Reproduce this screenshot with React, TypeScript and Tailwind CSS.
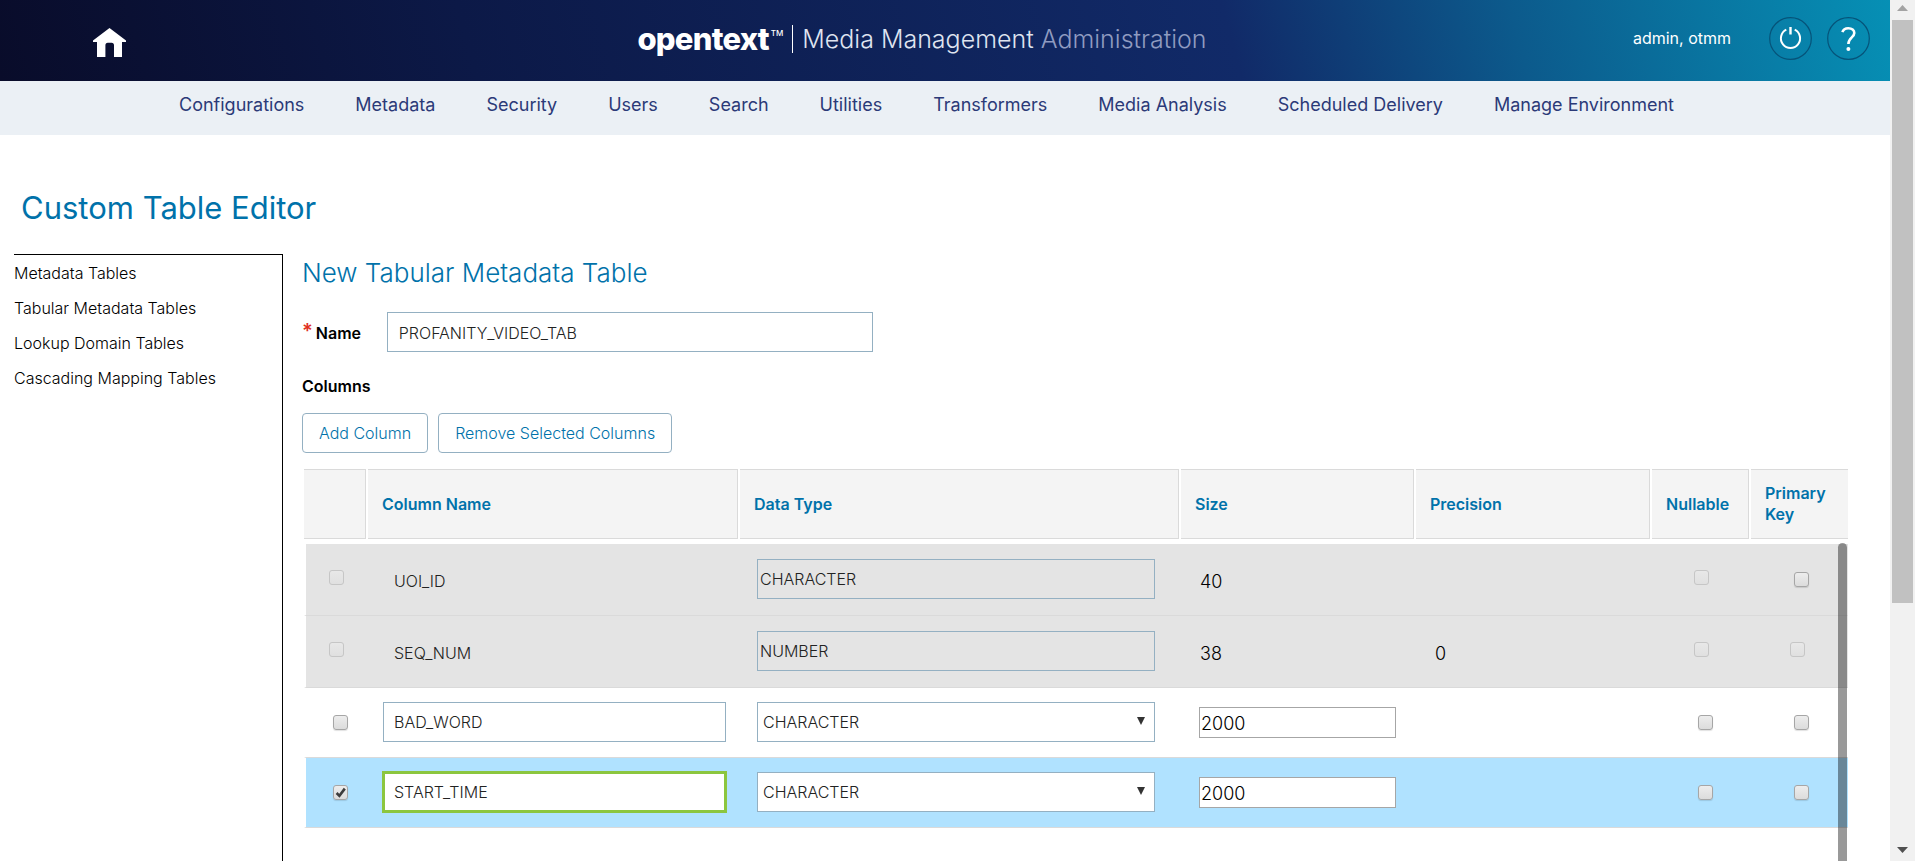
import React, { useState } from "react";

const navItems = [
  "Configurations",
  "Metadata",
  "Security",
  "Users",
  "Search",
  "Utilities",
  "Transformers",
  "Media Analysis",
  "Scheduled Delivery",
  "Manage Environment",
];

const sideItems = [
  "Metadata Tables",
  "Tabular Metadata Tables",
  "Lookup Domain Tables",
  "Cascading Mapping Tables",
];

const headings = ["", "Column Name", "Data Type", "Size", "Precision", "Nullable", "Primary Key"];

type Row = {
  name: string;
  type: string;
  size: string;
  precision?: string;
  fixed: boolean;
  keyDisabled?: boolean;
  selected?: boolean;
};

const initialRows: Row[] = [
  { name: "UOI_ID", type: "CHARACTER", size: "40", fixed: true },
  { name: "SEQ_NUM", type: "NUMBER", size: "38", precision: "0", fixed: true, keyDisabled: true },
  { name: "BAD_WORD", type: "CHARACTER", size: "2000", fixed: false },
  { name: "START_TIME", type: "CHARACTER", size: "2000", fixed: false, selected: true },
];

function HomeIcon() {
  return (
    <svg viewBox="0 0 33 29" className="h-[29px] w-[33px]" fill="#fff" aria-hidden="true">
      <path d="M16.5 0 33 12.6V14H29V29H21V17.5Q21 14.8 18.6 14.8H14.8Q12.4 14.8 12.4 17.5V29H4V14H0V12.6Z" />
    </svg>
  );
}

function PowerIcon() {
  return (
    <svg viewBox="0 0 43 43" className="h-[43px] w-[43px]" fill="none" aria-hidden="true">
      <circle cx="21.5" cy="21.5" r="20.8" stroke="#065379" strokeWidth="1.2" />
      <path d="M17.3 12.7A9.6 9.6 0 1 0 25.7 12.7" stroke="#fff" strokeWidth="2" />
      <path d="M21.5 10V17.5" stroke="#fff" strokeWidth="2.4" />
    </svg>
  );
}

function HelpIcon() {
  return (
    <svg viewBox="0 0 43 43" className="h-[43px] w-[43px]" fill="none" aria-hidden="true">
      <circle cx="21.5" cy="21.5" r="20.8" stroke="#065379" strokeWidth="1.2" />
      <path
        d="M15.4 15.2C16.2 12.6 18.4 11.3 21.3 11.3C24.9 11.3 27.3 13.2 27.3 16.1C27.3 20.4 21.4 20.6 21.4 27"
        stroke="#fff"
        strokeWidth="2.6"
      />
      <circle cx="21.4" cy="32" r="2" fill="#fff" />
    </svg>
  );
}

function Check({ label, disabled, checked }: { label: string; disabled?: boolean; checked?: boolean }) {
  const [on, setOn] = useState(!!checked);
  return (
    <span className="relative block h-[15px] w-[15px]">
      <input
        type="checkbox"
        aria-label={label}
        disabled={disabled}
        checked={on}
        onChange={(e) => setOn(e.target.checked)}
        className="block h-[15px] w-[15px] appearance-none rounded-[3px] border border-[#a6a6a6] bg-linear-to-b from-[#ededed] to-[#dcdcdc] shadow-[0_1px_1px_rgba(0,0,0,0.12)] disabled:border-[#c6c6c6] disabled:from-[#e8e8e8] disabled:to-[#e0e0e0] disabled:shadow-none"
      />
      {on && (
        <svg viewBox="0 0 15 15" className="pointer-events-none absolute inset-0 h-[15px] w-[15px]" aria-hidden="true">
          <path d="M3.6 8 6.4 10.8 11.8 3.6" fill="none" stroke="#3c3c3c" strokeWidth="2.6" />
        </svg>
      )}
    </span>
  );
}

function TableRow({ row }: { row: Row }) {
  const bg = row.selected ? "bg-[#b0e2ff]" : row.fixed ? "bg-[#e4e4e4]" : "bg-white";
  const cell = `${bg} ${row.fixed ? "h-[72px]" : "h-[70px]"} border-b border-[#dadada] p-0 pb-px align-middle`;
  return (
    <tr>
      <td className={`${cell} border-l-2 border-l-white`}>
        <div className={row.fixed ? "-mt-1 pl-[23px]" : "pl-[27px]"}>
          <Check label={`Select ${row.name}`} disabled={row.fixed} checked={row.selected} />
        </div>
      </td>
      <td className={cell}>
        {row.fixed ? (
          <div className="pt-1 pl-[26px] text-base font-light text-[#222]">{row.name}</div>
        ) : (
          <div className="pr-[14px] pl-[15px]">
            <input
              aria-label="Column name"
              defaultValue={row.name}
              className={`block h-10 w-full bg-white text-base font-light text-[#222] outline-none ${
                row.selected ? "border-2 border-[#8cc63f] px-[9px] ring-1 ring-[#8cc63f]" : "border border-[#94b0c2] px-[10px]"
              }`}
            />
          </div>
        )}
      </td>
      <td className={cell}>
        <div className="relative mr-[26px] ml-[17px]">
          {row.fixed ? (
            <input
              aria-label={`${row.name} data type`}
              readOnly
              value={row.type}
              className="block h-10 w-full border border-[#94b0c2] bg-transparent px-0.5 text-base font-light text-[#222] outline-none"
            />
          ) : (
            <>
              <select
                aria-label={`${row.name} data type`}
                defaultValue={row.type}
                className="block h-10 w-full appearance-none border border-[#94b0c2] bg-white px-[5px] text-base font-light text-[#222] outline-none"
              >
                <option>CHARACTER</option>
                <option>NUMBER</option>
                <option>DATE</option>
              </select>
              <svg viewBox="0 0 8 8" className="pointer-events-none absolute top-[15px] right-[10px] h-2 w-2" aria-hidden="true">
                <path d="M0 0H8L4 8Z" fill="#333" />
              </svg>
            </>
          )}
        </div>
      </td>
      <td className={cell}>
        {row.fixed ? (
          <div className="pt-1.5 pl-[19px] text-lg font-light text-black">{row.size}</div>
        ) : (
          <div className="pt-px pr-5 pl-[18px]">
            <input
              aria-label={`${row.name} size`}
              defaultValue={row.size}
              className="block h-[31px] w-full border border-[#a6a6a6] bg-white px-px pt-0.5 text-lg font-light text-black outline-none"
            />
          </div>
        )}
      </td>
      <td className={cell}>
        <div className="pt-1.5 pl-[19px] text-lg font-light text-black">{row.precision}</div>
      </td>
      <td className={cell}>
        <div className={row.fixed ? "-mt-1 pl-[42px]" : "pl-[46px]"}>
          <Check label={`${row.name} nullable`} disabled={row.fixed} />
        </div>
      </td>
      <td className={cell}>
        <div className={row.keyDisabled ? "-mt-1 pl-[39px]" : "pl-[43px]"}>
          <Check label={`${row.name} primary key`} disabled={row.keyDisabled} />
        </div>
      </td>
    </tr>
  );
}

export default function App() {
  return (
    <div className="flex h-screen overflow-hidden bg-white font-['Inter',sans-serif] text-black">
      <div className="flex min-w-0 flex-1 flex-col">
        <header className="grid h-[81px] shrink-0 grid-cols-[1fr_auto_1fr] items-center bg-[linear-gradient(75deg,#090c2a_0%,#0c1947_25%,#112a68_65%,#0c5a8c_80%,#0690b5_100%)] pr-5">
          <a href="#home" aria-label="Home" className="ml-[93px] w-fit pt-1">
            <HomeIcon />
          </a>
          <div className="mr-[26px] flex items-center pb-1 whitespace-nowrap text-white">
            <span className="text-[31px] leading-9 font-extrabold tracking-tight">opentext</span>
            <span className="mb-3 ml-0.5 text-[8px] leading-3 font-medium">TM</span>
            <span className="mx-[9px] h-7 w-px bg-white" />
            <span className="text-[25px] leading-9 font-light text-[#dfe4f0]">
              Media Management <span className="font-light text-[#8f9bc0]">Administration</span>
            </span>
          </div>
          <div className="flex items-center justify-end pb-[5px]">
            <span className="mr-[38px] text-base text-white">admin, otmm</span>
            <button type="button" aria-label="Log out" className="mr-[15px]">
              <PowerIcon />
            </button>
            <button type="button" aria-label="Help">
              <HelpIcon />
            </button>
          </div>
        </header>

        <nav className="flex h-[54px] shrink-0 gap-[51px] bg-[#ebf0f5] pt-[10px] pl-[179px] text-lg leading-7 font-normal whitespace-nowrap text-[#2b3a78]">
          {navItems.map((item) => (
            <a key={item} href="#nav">
              {item}
            </a>
          ))}
        </nav>

        <h1 className="mt-[53px] mb-[26px] ml-[21px] text-[31px] leading-10 font-normal text-[#0072aa]">Custom Table Editor</h1>

        <div className="flex min-h-0 flex-1">
          <aside className="ml-[14px] flex w-[269px] shrink-0 flex-col border-t border-r border-black pt-px text-base leading-[35px] font-light">
            {sideItems.map((item) => (
              <a key={item} href="#tables">
                {item}
              </a>
            ))}
          </aside>

          <main className="flex min-w-0 flex-1 flex-col pr-[42px] pl-[19px]">
            <h2 className="pt-px text-[26px] leading-9 font-[350] text-[#0072aa]">New Tabular Metadata Table</h2>

            <div className="mt-[21px] flex h-10 items-center">
              <span className="mr-[3px] pb-0.5 text-xl leading-10 font-semibold text-[#e0301e]">*</span>
              <label htmlFor="table-name" className="w-[71px] pt-px text-base font-semibold">
                Name
              </label>
              <input
                id="table-name"
                defaultValue="PROFANITY_VIDEO_TAB"
                className="h-10 w-[486px] border border-[#94b0c2] bg-white px-[11px] pt-px text-base font-light text-[#222] outline-none"
              />
            </div>

            <h3 className="mt-[22px] text-base leading-6 font-semibold">Columns</h3>

            <div className="mt-[15px] flex gap-[10px]">
              <button type="button" className="h-10 rounded-[4px] border border-[#94b0c2] px-4 text-base font-light text-[#0072aa]">
                Add Column
              </button>
              <button type="button" className="h-10 rounded-[4px] border border-[#94b0c2] px-4 text-base font-light text-[#0072aa]">
                Remove Selected Columns
              </button>
            </div>

            <div className="relative mt-4 ml-0.5 flex-1">
              <table className="w-full table-fixed border-separate border-spacing-0">
                <colgroup>
                  <col className="w-[64px]" />
                  <col className="w-[372px]" />
                  <col className="w-[441px]" />
                  <col className="w-[235px]" />
                  <col className="w-[236px]" />
                  <col className="w-[99px]" />
                  <col className="w-[97px]" />
                </colgroup>
                <thead>
                  <tr>
                    {headings.map((text, i) => (
                      <th key={i} className="p-0 pb-[5px] text-left text-base leading-[21px] font-semibold text-[#0072aa]">
                        <div
                          className={`flex h-[70px] items-center border-y border-[#dadada] bg-[#f4f4f4] pl-[14px] ${
                            i < headings.length - 1 ? "mr-0.5 border-r" : ""
                          }`}
                        >
                          {text}
                        </div>
                      </th>
                    ))}
                  </tr>
                </thead>
                <tbody>
                  {initialRows.map((row) => (
                    <TableRow key={row.name} row={row} />
                  ))}
                </tbody>
              </table>
              <div className="absolute top-[74px] right-px bottom-0 w-[9px] rounded-t-full bg-black/40" />
            </div>
          </main>
        </div>
      </div>

      <div className="flex w-[25px] shrink-0 flex-col items-center bg-[#f1f1f1]" aria-hidden="true">
        <svg viewBox="0 0 25 20" className="h-5 w-[25px] shrink-0">
          <path d="M7 11 12.5 5 18 11Z" fill="#a3a3a3" />
        </svg>
        <div className="w-[21px] flex-[583] bg-[#c1c1c1]" />
        <div className="flex-[238]" />
        <svg viewBox="0 0 25 20" className="h-5 w-[25px] shrink-0">
          <path d="M7 6 12.5 12 18 6Z" fill="#505050" />
        </svg>
      </div>
    </div>
  );
}
